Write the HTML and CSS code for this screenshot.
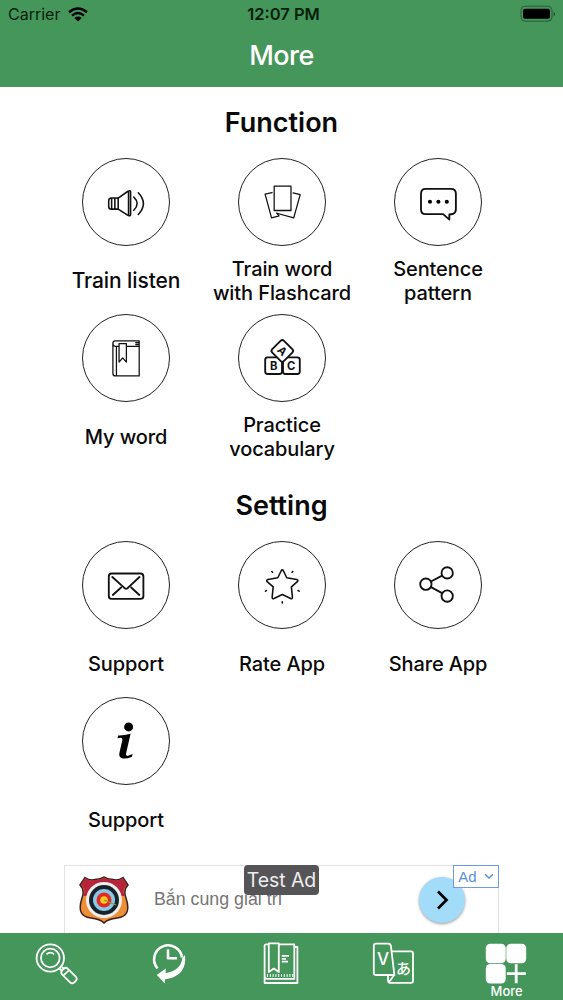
FILE: index.html
```
<!DOCTYPE html>
<html lang="en">
<head>
    <meta charset="UTF-8">
    <meta name="viewport" content="width=device-width, initial-scale=1.0">
    <title>More</title>
    <link rel="stylesheet" href="styles.css">
</head>
<body>
    <header class="header">
        <div class="status-bar">
            <div class="carrier">
                <span>Carrier</span>
                <svg class="wifi" width="20" height="15" viewBox="0 0 20 15">
                    <path d="M1 5.2 Q10 -2.2 19 5.2" />
                    <path d="M4 8.6 Q10 3.6 16 8.6" />
                    <path class="wifi-dot" d="M6.4 10.9 Q10 8.2 13.6 10.9 L10 14.5 Z" />
                </svg>
            </div>
            <span class="time">12:07 PM</span>
            <svg class="battery" width="36" height="18" viewBox="0 0 36 18">
                <rect class="battery-case" x="1" y="1.2" width="31" height="15" rx="4" />
                <rect x="3" y="3.7" width="27" height="10" rx="2" />
                <path d="M33.8 6.5 Q35.6 9 33.8 11.5 Z" />
            </svg>
        </div>
        <h1>More</h1>
    </header>

    <main class="content">
        <h2>Function</h2>
        <div class="grid">
            <div class="item">
                <svg class="icon" viewBox="0 0 88 88">
                    <path d="M36 40 H29 Q26.3 40 26.3 43 V48.5 Q26.3 51.3 29 51.3 H36 Z M29.3 40 V51.3 M32.6 40 V51.3" />
                    <path d="M36 40 L46 33 Q48.7 31.6 48.7 34 V56.5 Q48.7 59 46 57.6 L36 51.3 M46.6 33.5 V57.5" />
                    <path d="M52 39 Q58.8 45.5 52 52.5 M56.6 34.5 Q67 45.5 56.6 56.8" />
                </svg>
                <p class="large">Train listen</p>
            </div>
            <div class="item">
                <svg class="icon thin" viewBox="0 0 88 88">
                    <rect x="36" y="27.7" width="17.2" height="25" />
                    <path d="M33.8 34.3 L26.7 36 L33.3 60.3 L41 58.2 L38.8 55.5" />
                    <path d="M55.3 34.6 L62.6 36.4 L56 60.3 L38.8 55.5" />
                </svg>
                <p>Train word<br>with Flashcard</p>
            </div>
            <div class="item">
                <svg class="icon bold" viewBox="0 0 88 88">
                    <path d="M31.3 30.6 H57.3 Q62.3 30.6 62.3 35.6 V51.3 Q62.3 55 59 56.3 L55.6 56.8 V62 L49.3 56.4 H31.3 Q26.6 56.4 26.6 51.3 V35.6 Q26.6 30.6 31.3 30.6 Z" />
                    <g class="solid">
                        <circle cx="35.8" cy="43.7" r="2.1" />
                        <circle cx="44.4" cy="43.7" r="2.1" />
                        <circle cx="53" cy="43.7" r="2.1" />
                    </g>
                </svg>
                <p>Sentence<br>pattern</p>
            </div>
            <div class="item">
                <svg class="icon thin" viewBox="0 0 88 88">
                    <path d="M57.5 26.4 H33 Q30.6 26.4 30.6 29 V59.8 Q30.6 62.3 33 62.3 H57.5 V32 H33 Q30.6 32 30.6 29 M34.2 32 V62.3 M57.5 26.4 V32 M54 28.4 H57 M54 30.2 H57" />
                    <path class="paper" d="M36.9 29.2 H44.4 V48.2 L40.6 43.8 L36.9 48.2 Z" />
                </svg>
                <p>My word</p>
            </div>
            <div class="item">
                <svg class="icon bold" viewBox="0 0 88 88">
                    <rect x="26.8" y="43.4" width="17.2" height="17" rx="2.5" />
                    <rect x="45" y="43.4" width="17.2" height="17" rx="2.5" />
                    <rect class="paper" x="35.8" y="28.2" width="17" height="17" rx="2.5" transform="rotate(45 44.3 36.7)" />
                    <text x="35.5" y="56.2">B</text>
                    <text x="53.4" y="56.2">C</text>
                    <text x="44.3" y="40.8" transform="rotate(45 44.3 36.7)">A</text>
                </svg>
                <p>Practice<br>vocabulary</p>
            </div>
        </div>

        <h2>Setting</h2>
        <div class="grid">
            <div class="item">
                <svg class="icon bold" viewBox="0 0 88 88">
                    <rect x="26.4" y="32.2" width="35.4" height="26" rx="3" />
                    <path d="M30 35.8 L41.5 46.2 Q44.1 49.6 46.7 46.2 L57.8 35.8 M30.5 54.2 L39 46.5 M57.7 54.2 L49.3 46.5" />
                </svg>
                <p>Support</p>
            </div>
            <div class="item">
                <svg class="icon" viewBox="0 0 88 88">
                    <path d="M43.2 29.4 Q44.3 27.6 45.4 29.4 L48.9 36.6 L59 38.4 Q61 39 59.8 40.6 L53.6 46 L54.7 56.6 Q54.6 58.6 52.8 57.8 L44.3 53.8 L35.8 57.8 Q34 58.6 33.9 56.6 L35 46 L28.8 40.6 Q27.6 39 29.6 38.4 L39.7 36.6 Z" />
                    <path d="M54.3 31 L55 30.2 M60.4 49.7 L61.6 50.3 M44.3 61.2 V62.4 M34.3 31 L33.6 30.2 M28.2 49.7 L27 50.3" />
                </svg>
                <p>Rate App</p>
            </div>
            <div class="item">
                <svg class="icon bold" viewBox="0 0 88 88">
                    <circle cx="31.6" cy="43.2" r="5.8" />
                    <circle cx="53.4" cy="31.6" r="5.8" />
                    <circle cx="53.4" cy="55.3" r="5.8" />
                    <path d="M36.8 40.4 L48.2 34.4 M36.8 46.2 L48.2 52.3" />
                </svg>
                <p>Share App</p>
            </div>
            <div class="item">
                <svg class="icon info" viewBox="0 0 88 88">
                    <circle cx="46.7" cy="29.6" r="4.6" />
                    <path d="M35.3 41.2 L36 38.4 Q42 38.6 48.7 36.6 L44 57 Q43.6 59.8 46 59 L50.8 57.4 L50 60 Q44.6 62.4 40.6 61.8 Q36.4 61 37.2 56.6 L40.2 43 Q40.6 40.8 38.2 40.8 Z" />
                </svg>
                <p>Support</p>
            </div>
        </div>

        <div class="ad">
            <svg class="shield" width="50" height="48" viewBox="0 0 50 48">
                <path class="shield-base" d="M6 1.5 Q11 5 16 3.5 Q22 3 25 1 Q28 3 34 3.5 Q39 5 44 1.5 L49 9 Q44 14 47 22 Q50 31 48 36 Q46 41 38 42 Q29 43 25 47 Q21 43 12 42 Q4 41 2 36 Q0 31 3 22 Q6 14 1 9 Z" />
                <path class="shield-top" d="M6 2 Q11 5.5 16 4 Q22 3.5 25 2 Q28 3.5 34 4 Q39 5.5 44 2 L48 9 Q43 13 45.5 20 H4.5 Q7 13 2 9 Z" />
                <circle cx="25" cy="24" r="18" fill="#eee" />
                <circle cx="25" cy="24" r="15" fill="#17232b" />
                <circle cx="25" cy="24" r="11" fill="#8bc7e6" />
                <circle cx="25" cy="24" r="7.5" fill="#e32b24" />
                <circle cx="25" cy="24" r="3.8" fill="#f9c821" />
                <path d="M25 24 L37 29" stroke="#8a9a35" stroke-width="1.3" />
            </svg>
            <span class="ad-text">Bắn cung giải trí</span>
            <span class="ad-button">
                <svg width="46" height="46" viewBox="0 0 46 46">
                    <path d="M19 14.5 L27.5 23 L19 31.5" />
                </svg>
            </span>
            <span class="test-label">Test Ad</span>
            <span class="ad-label">Ad
                <svg width="10" height="7" viewBox="0 0 10 7">
                    <path d="M1 1.2 L5 5 L9 1.2" />
                </svg>
            </span>
        </div>
    </main>

    <nav class="tabs">
        <a class="tab">
            <svg viewBox="0 0 44 44">
                <circle cx="16.3" cy="16" r="13.7" />
                <circle cx="16.3" cy="16" r="9.3" />
                <path d="M12.5 12.2 Q16.3 9 20.2 12.2 M25.5 26.5 L27.5 28.5 M28 25 L29.5 26.5" />
                <rect x="26.8" y="29.3" width="17" height="8" rx="3" transform="rotate(45 34.8 33.1)" />
                <path d="M34.8 28.4 L29.8 33.2" />
            </svg>
        </a>
        <a class="tab">
            <svg viewBox="0 0 44 44">
                <path class="heavy" d="M10.5 26.5 A14 14 0 1 1 35 15.5" />
                <path class="heavy" d="M21 7.3 V16.3 H30" />
                <path class="solid" d="M38 13 Q40.5 34 18 37.3 L17.8 41.5 L9.8 33 L18.8 26.5 L18.6 31.2 Q34 28.5 35.3 16 Z" />
            </svg>
        </a>
        <a class="tab">
            <svg viewBox="0 0 44 44">
                <path d="M9.8 2.3 H7.3 Q5.6 2.3 5.6 4 V41 H38.4 V5 H35.5 M19.8 2.3 H35.3 V36.8 H8.5 Q5.6 36.8 5.6 34 M9.8 1.4 H19.8 V30 L14.8 26.6 L9.8 30 Z M22.8 13.8 H30 M22.8 16.8 H27 M22.8 19.7 H29" />
                <path class="stitch" d="M8 33.6 H35" />
            </svg>
        </a>
        <a class="tab">
            <svg viewBox="0 0 44 44">
                <path d="M4 1.7 H16.5 Q18.4 1.7 18.9 4 L22.4 33 H3.5 Q1.8 33 1.8 31 V4 Q1.8 1.7 4 1.7 Z" />
                <path d="M20 9.3 H39 Q41 9.3 41 11.3 V38.8 Q41 40.8 39 40.8 H18 Q16 40.8 16 38.6 V33.5 M22.2 33 L17.2 39.8" />
                <text class="latin" x="11" y="22.6">V</text>
                <text class="kana" x="31.4" y="31.8">あ</text>
            </svg>
        </a>
        <a class="tab active">
            <svg viewBox="0 0 44 44">
                <g class="solid">
                    <rect x="0.8" y="1.7" width="19.9" height="19.6" rx="4.5" />
                    <rect x="21.3" y="1.7" width="19.9" height="19.6" rx="4.5" />
                    <rect x="0.8" y="22" width="19.9" height="19.6" rx="4.5" />
                </g>
                <path class="plus" d="M31.2 22.3 V41.3 M21.8 31.7 H40.8" />
            </svg>
            <span>More</span>
        </a>
    </nav>
</body>
</html>
```

FILE: styles.css
```
* {
    box-sizing: border-box;
}

body {
    font-family: Inter, "Noto Sans", sans-serif;
    margin: 0;
    height: 1000px;
    display: flex;
    flex-direction: column;
    background-color: #fff;
    color: #0a0a0a;
    overflow: hidden;
}

h1,
h2,
p {
    margin: 0;
}

.header {
    height: 87px;
    background-color: #45965a;
}

.status-bar {
    height: 28px;
    padding: 0 7px 0 8px;
    display: grid;
    grid-template-columns: 1fr auto 1fr;
    align-items: center;
    font-size: 16px;
    color: #06200d;
}

.carrier {
    display: flex;
    align-items: center;
    gap: 8px;
}

.wifi path {
    fill: none;
    stroke: #000;
    stroke-width: 2.4;
}

.wifi .wifi-dot {
    fill: #000;
    stroke: none;
}

.time {
    padding-left: 3px;
    font-size: 16.5px;
    font-weight: 600;
}

.battery {
    justify-self: end;
}

.battery-case {
    fill: none;
    stroke: #2a5c37;
}

h1 {
    font-size: 27px;
    font-weight: 500;
    line-height: 56px;
    letter-spacing: -0.5px;
    text-align: center;
    color: #fff;
}

.content {
    flex: 1;
    display: flex;
    flex-direction: column;
    align-items: center;
}

h2 {
    font-size: 27px;
    font-weight: 600;
    line-height: 71px;
    text-align: center;
}

.grid {
    display: grid;
    grid-template-columns: repeat(3, 156px);
    grid-auto-rows: 156px;
}

.item {
    display: flex;
    flex-direction: column;
    align-items: center;
    gap: 10px;
}

.item p {
    height: 49px;
    padding: 1px 0 0 1px;
    display: flex;
    align-items: center;
    text-align: center;
    font-size: 20px;
    font-weight: 500;
    line-height: 24px;
    letter-spacing: -0.1px;
    white-space: nowrap;
}

.item .large {
    font-size: 21px;
}

.icon {
    width: 88px;
    height: 88px;
    flex: none;
    border: 1.5px solid #222;
    border-radius: 50%;
    fill: none;
    stroke: #111;
    stroke-width: 1.6;
    stroke-linecap: round;
    stroke-linejoin: round;
}

.icon.thin {
    stroke-width: 1.3;
}

.icon.bold {
    stroke-width: 1.9;
}

.icon.info,
.icon .solid {
    fill: #000;
    stroke: none;
}

.icon .paper {
    fill: #fff;
}

.icon text {
    fill: #111;
    stroke: none;
    font-size: 11.5px;
    font-weight: 700;
    text-anchor: middle;
}

/* Ad banner */
.ad {
    position: relative;
    width: 435px;
    height: 68px;
    margin-top: 12px;
    padding: 0 33px 0 14px;
    display: flex;
    align-items: center;
    border: 1px solid #e2e2e2;
    border-bottom: none;
}

.shield-base {
    fill: #ee8f35;
    stroke: #3c2020;
    stroke-width: 1.5;
}

.shield-top {
    fill: #b5243a;
}

.ad-text {
    margin-left: 25px;
    font-family: "Liberation Sans", sans-serif;
    font-size: 17.8px;
    color: #757575;
}

.ad-button {
    width: 46px;
    height: 46px;
    margin-left: auto;
    border-radius: 50%;
    background-color: #a3dcf8;
    box-shadow: 0 1px 3px rgba(0, 0, 0, 0.4);
}

.ad-button path {
    fill: none;
    stroke: #000;
    stroke-width: 2.7;
}

.test-label {
    position: absolute;
    left: 179px;
    top: -1px;
    width: 75px;
    height: 30px;
    border-radius: 4px;
    background-color: #555557;
    color: #eee;
    font-size: 19.5px;
    line-height: 31px;
    letter-spacing: -0.1px;
    text-align: center;
}

.ad-label {
    position: absolute;
    right: -1px;
    top: -1px;
    width: 46px;
    height: 23px;
    display: flex;
    align-items: center;
    justify-content: center;
    gap: 7px;
    border: 1.5px solid #6d9ce5;
    background-color: #fff;
    color: #5c8fdc;
    font-family: "Liberation Sans", sans-serif;
    font-size: 15px;
}

.ad-label path {
    fill: none;
    stroke: #5c8fdc;
    stroke-width: 1.5;
}

/* Bottom tabs */
.tabs {
    height: 67px;
    display: grid;
    grid-template-columns: repeat(5, 1fr);
    background-color: #45965a;
    position: relative;
}

.tab {
    padding-top: 9px;
    display: flex;
    flex-direction: column;
    align-items: center;
    color: #fff;
}

.tab svg {
    width: 44px;
    height: 44px;
    fill: none;
    stroke: #fff;
    stroke-width: 1.8;
    stroke-linejoin: round;
}

.tab .heavy {
    stroke-width: 2.6;
}

.tab .plus {
    stroke-width: 2.8;
}

.tab .solid {
    fill: #fff;
    stroke: none;
}

.tab .stitch {
    stroke-width: 3;
    stroke-dasharray: 1 1.8;
}

.tab text {
    fill: #fff;
    stroke: none;
    text-anchor: middle;
}

.tab .latin {
    font-size: 17px;
    font-weight: 500;
}

.tab .kana {
    font-family: "Noto Sans CJK JP", sans-serif;
    font-size: 15px;
    font-weight: 500;
}

.tab span {
    font-size: 13px;
    font-weight: 500;
    line-height: 10px;
}
```
